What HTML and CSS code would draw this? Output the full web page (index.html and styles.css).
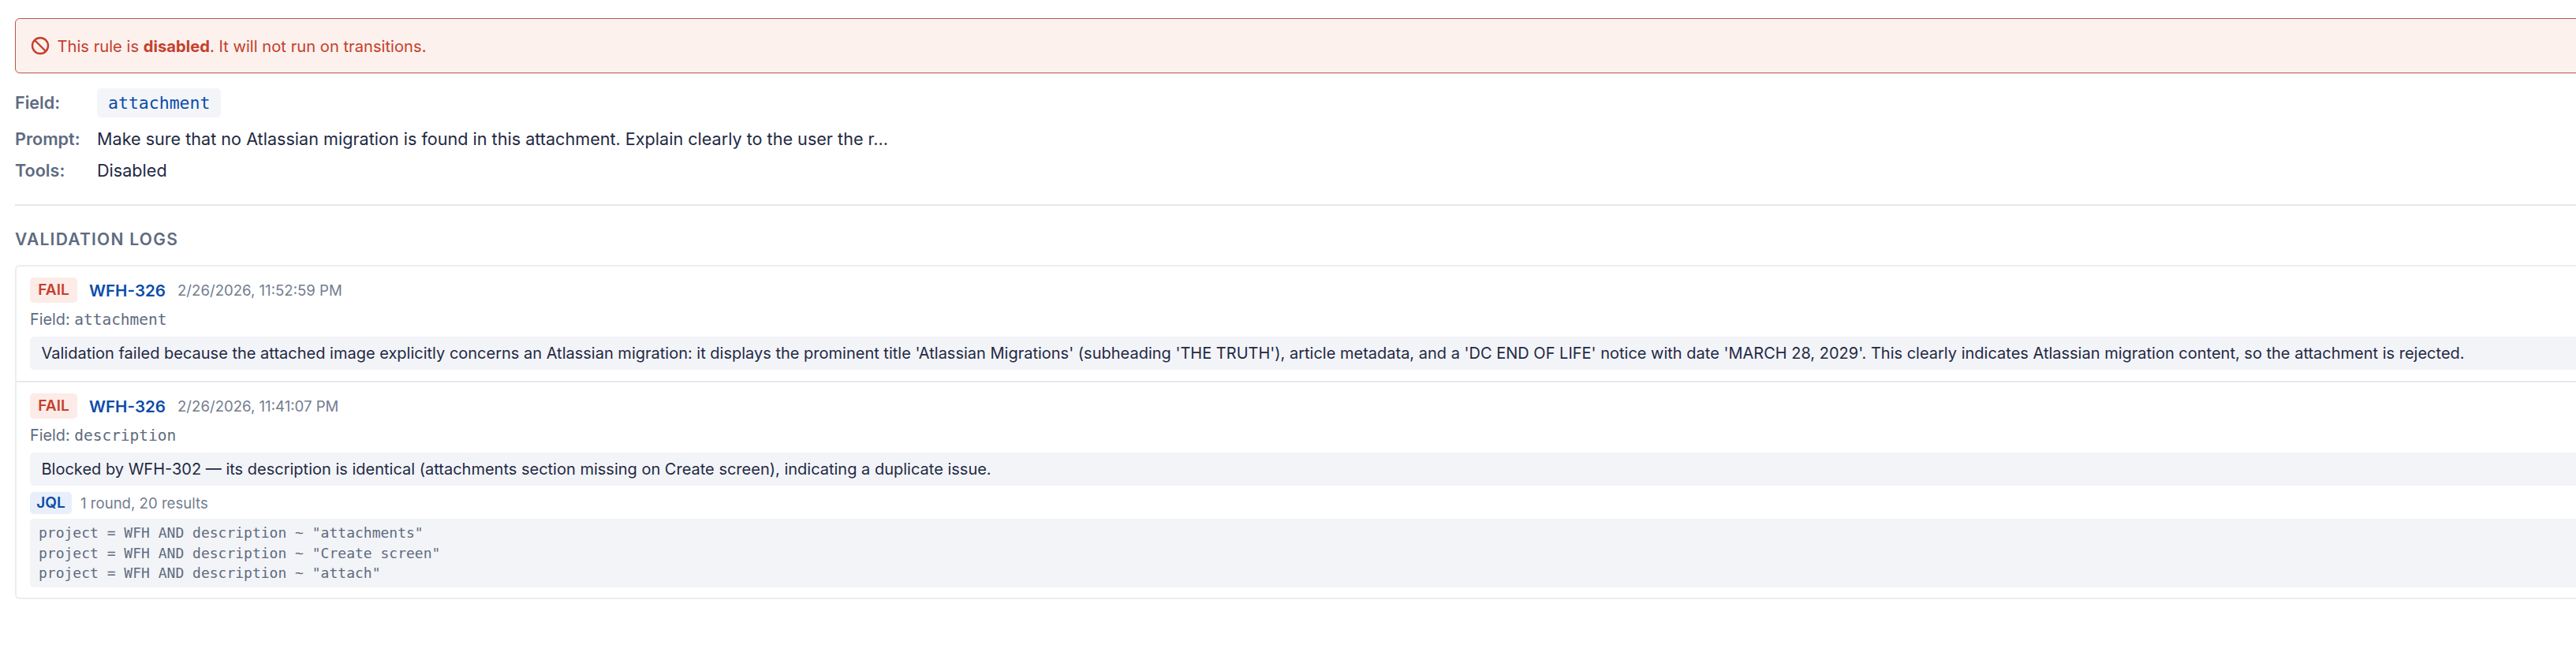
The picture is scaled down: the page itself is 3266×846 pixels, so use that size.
FILE: index.html
```html
<!DOCTYPE html>
<html lang="en">
<head>
<meta charset="utf-8">
<title>Rule details</title>
<link rel="stylesheet" href="styles.css">
</head>
<body>
<main class="page">
  <div class="alert">
    <svg class="alert-icon" viewBox="0 0 24 24" fill="none" stroke="currentColor" stroke-width="2.4"><circle cx="12" cy="12" r="10"/><line x1="5" y1="5" x2="19" y2="19"/></svg>
    <span>This rule is <strong>disabled</strong>. It will not run on transitions.</span>
  </div>
  <dl class="meta">
    <div class="meta-row meta-field"><dt>Field:</dt><dd><code class="chip">attachment</code></dd></div>
    <div class="meta-row meta-prompt"><dt>Prompt:</dt><dd>Make sure that no Atlassian migration is found in this attachment. Explain clearly to the user the r...</dd></div>
    <div class="meta-row meta-tools"><dt>Tools:</dt><dd>Disabled</dd></div>
  </dl>
  <hr class="rule">
  <h2 class="heading">VALIDATION LOGS</h2>
  <section class="logs">
    <article class="log">
      <div class="log-head"><span class="badge">FAIL</span><a class="key">WFH-326</a><time class="stamp">2/26/2026, 11:52:59 PM</time></div>
      <div class="log-field">Field: <code>attachment</code></div>
      <p class="message">Validation failed because the attached image explicitly concerns an Atlassian migration: it displays the prominent title 'Atlassian Migrations' (subheading 'THE TRUTH'), article metadata, and a 'DC END OF LIFE' notice with date 'MARCH 28, 2029'. This clearly indicates Atlassian migration content, so the attachment is rejected.</p>
    </article>
    <article class="log">
      <div class="log-head"><span class="badge">FAIL</span><a class="key">WFH-326</a><time class="stamp">2/26/2026, 11:41:07 PM</time></div>
      <div class="log-field">Field: <code>description</code></div>
      <p class="message">Blocked by WFH-302 — its description is identical (attachments section missing on Create screen), indicating a duplicate issue.</p>
      <div class="jql-head"><span class="jql-badge">JQL</span><span class="jql-count">1 round, 20 results</span></div>
      <pre class="jql-code">project = WFH AND description ~ "attachments"
project = WFH AND description ~ "Create screen"
project = WFH AND description ~ "attach"</pre>
    </article>
  </section>
</main>
</body>
</html>
```
FILE: styles.css
```css
html, body { margin: 0; padding: 0; background: #fff; overflow: hidden; }
body { font-family: Inter, "Liberation Sans", sans-serif; color: #1f2a44; }
code, pre { font-family: "DejaVu Sans Mono", "Liberation Mono", monospace; }
.page { width: 3320px; padding: 23px 0 0 19px; box-sizing: border-box; }

.alert { height: 70px; box-sizing: border-box; display: flex; align-items: center; gap: 10px; padding: 0 18.5px; background: #fdf1ee; border: 1.5px solid #b5564a; border-radius: 6px; color: #c4402c; font-size: 20.2px; }
.alert strong { font-weight: 700; }
.alert-icon { width: 24px; height: 24px; flex: none; }

.meta { margin: 19px 0 0; }
.meta-row { display: flex; align-items: center; font-size: 21.6px; line-height: 30px; }
.meta dt { width: 104px; flex: none; color: #5e6b80; font-weight: 600; }
.meta dd { margin: 0; color: #1f2a44; }
.meta-field { height: 37px; }
.meta-field dt { position: relative; top: -1px; }
.meta-prompt { margin-top: 12px; }
.meta-tools { margin-top: 10px; }
.chip { display: block; padding: 0 14px; height: 37px; line-height: 37px; background: #f3f5f9; border-radius: 5px; color: #0c4ca8; font-size: 21.5px; }

.rule { margin: 28px 0 0; border: 0; border-top: 2px solid #e6e8ec; }
.heading { margin: 30px 0 0; height: 26px; line-height: 26px; font-size: 21px; font-weight: 600; letter-spacing: 1.25px; color: #5e6b80; }

.logs { margin-top: 19px; border: 2px solid #ebedf0; border-right: 0; border-radius: 6px; }
.log { padding: 14px 0 14px 17px; }
.log + .log { border-top: 2px solid #e6e8ec; }
.log:last-child { padding-bottom: 13px; }
.log-head { display: flex; align-items: center; height: 32px; }
.badge { width: 60px; height: 32px; line-height: 32px; text-align: center; background: #fcebe7; border-radius: 5px; color: #c4402c; font-size: 19px; font-weight: 600; }
.key { margin-left: 15px; color: #0c4ca8; font-size: 20.6px; font-weight: 600; }
.stamp { margin-left: 15px; color: #737d8f; font-size: 18.6px; }
.log-field { margin-top: 8px; height: 26px; line-height: 26px; color: #5e6b80; font-size: 19.8px; }
.log-field code { font-size: 19.5px; }
.message { margin: 9px 0 0; height: 42px; line-height: 42px; padding-left: 14.5px; background: #f3f4f8; border-radius: 5px; font-size: 20px; color: #1f2a44; white-space: nowrap; }
.jql-head { display: flex; align-items: center; margin-top: 8px; height: 28px; }
.jql-badge { width: 53px; height: 28px; line-height: 28px; text-align: center; background: #e8effb; border-radius: 5px; color: #0c4ca8; font-size: 19px; font-weight: 600; }
.jql-count { margin-left: 11px; color: #737d8f; font-size: 18.6px; }
.jql-code { margin: 6px 0 0; padding: 5px 0 5px 11px; background: #f3f4f8; border-radius: 5px; color: #5e6b80; font-size: 18px; line-height: 25.5px; }
```
